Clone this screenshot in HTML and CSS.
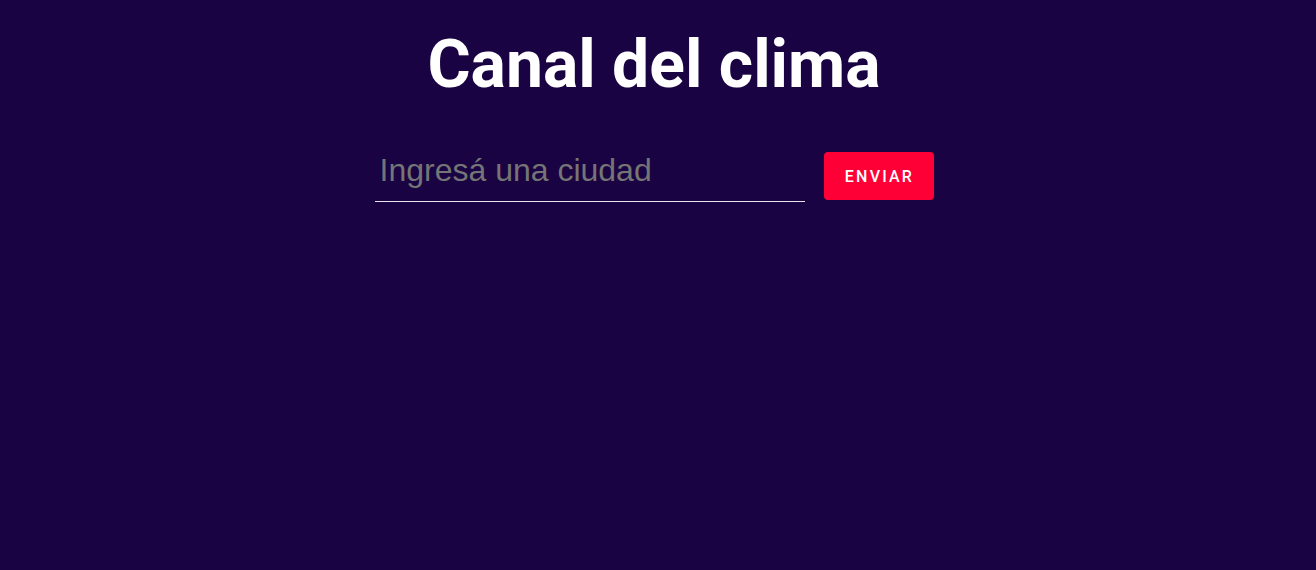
FILE: index.html
```html
<!DOCTYPE html>
<html lang="es">
<head>
<meta charset="utf-8">
<title>Canal del clima</title>
<link rel="stylesheet" href="styles.css">
</head>
<body>
<main class="app">
  <h1 class="title">Canal del clima</h1>
  <form class="search">
    <input class="search-input" type="text" placeholder="Ingresá una ciudad">
    <button class="search-btn" type="button">ENVIAR</button>
  </form>
</main>
</body>
</html>
```
FILE: styles.css
```css
html, body {
  margin: 0;
  padding: 0;
  height: 100%;
  background: #1a0342;
}
body {
  font-family: Roboto, "Noto Sans", sans-serif;
}
.app {
  display: flex;
  flex-direction: column;
  align-items: center;
  padding-top: 26px;
  padding-right: 8px;
}
.title {
  margin: 0;
  font-size: 66px;
  font-weight: 700;
  color: #ffffff;
  line-height: 78px;
  letter-spacing: 0;
}
.search {
  display: flex;
  align-items: flex-end;
  gap: 19px;
  margin-top: 41px;
}
.search-input {
  box-sizing: border-box;
  width: 430px;
  height: 57px;
  padding: 0 5px 6px;
  background: transparent;
  border: none;
  border-bottom: 1px solid #e8e4f0;
  color: #ffffff;
  font-family: "Liberation Sans", Arial, sans-serif;
  font-size: 32px;
  outline: none;
}
.search-input::placeholder {
  color: #757575;
}
.search-btn {
  width: 110px;
  height: 48px;
  margin-bottom: 2px;
  border: none;
  border-radius: 4px;
  background: #ff0036;
  color: #ffffff;
  font-family: Roboto, sans-serif;
  font-weight: 500;
  font-size: 16px;
  letter-spacing: 2.2px;
  padding: 0 0 0 2px;
  cursor: pointer;
}
```
